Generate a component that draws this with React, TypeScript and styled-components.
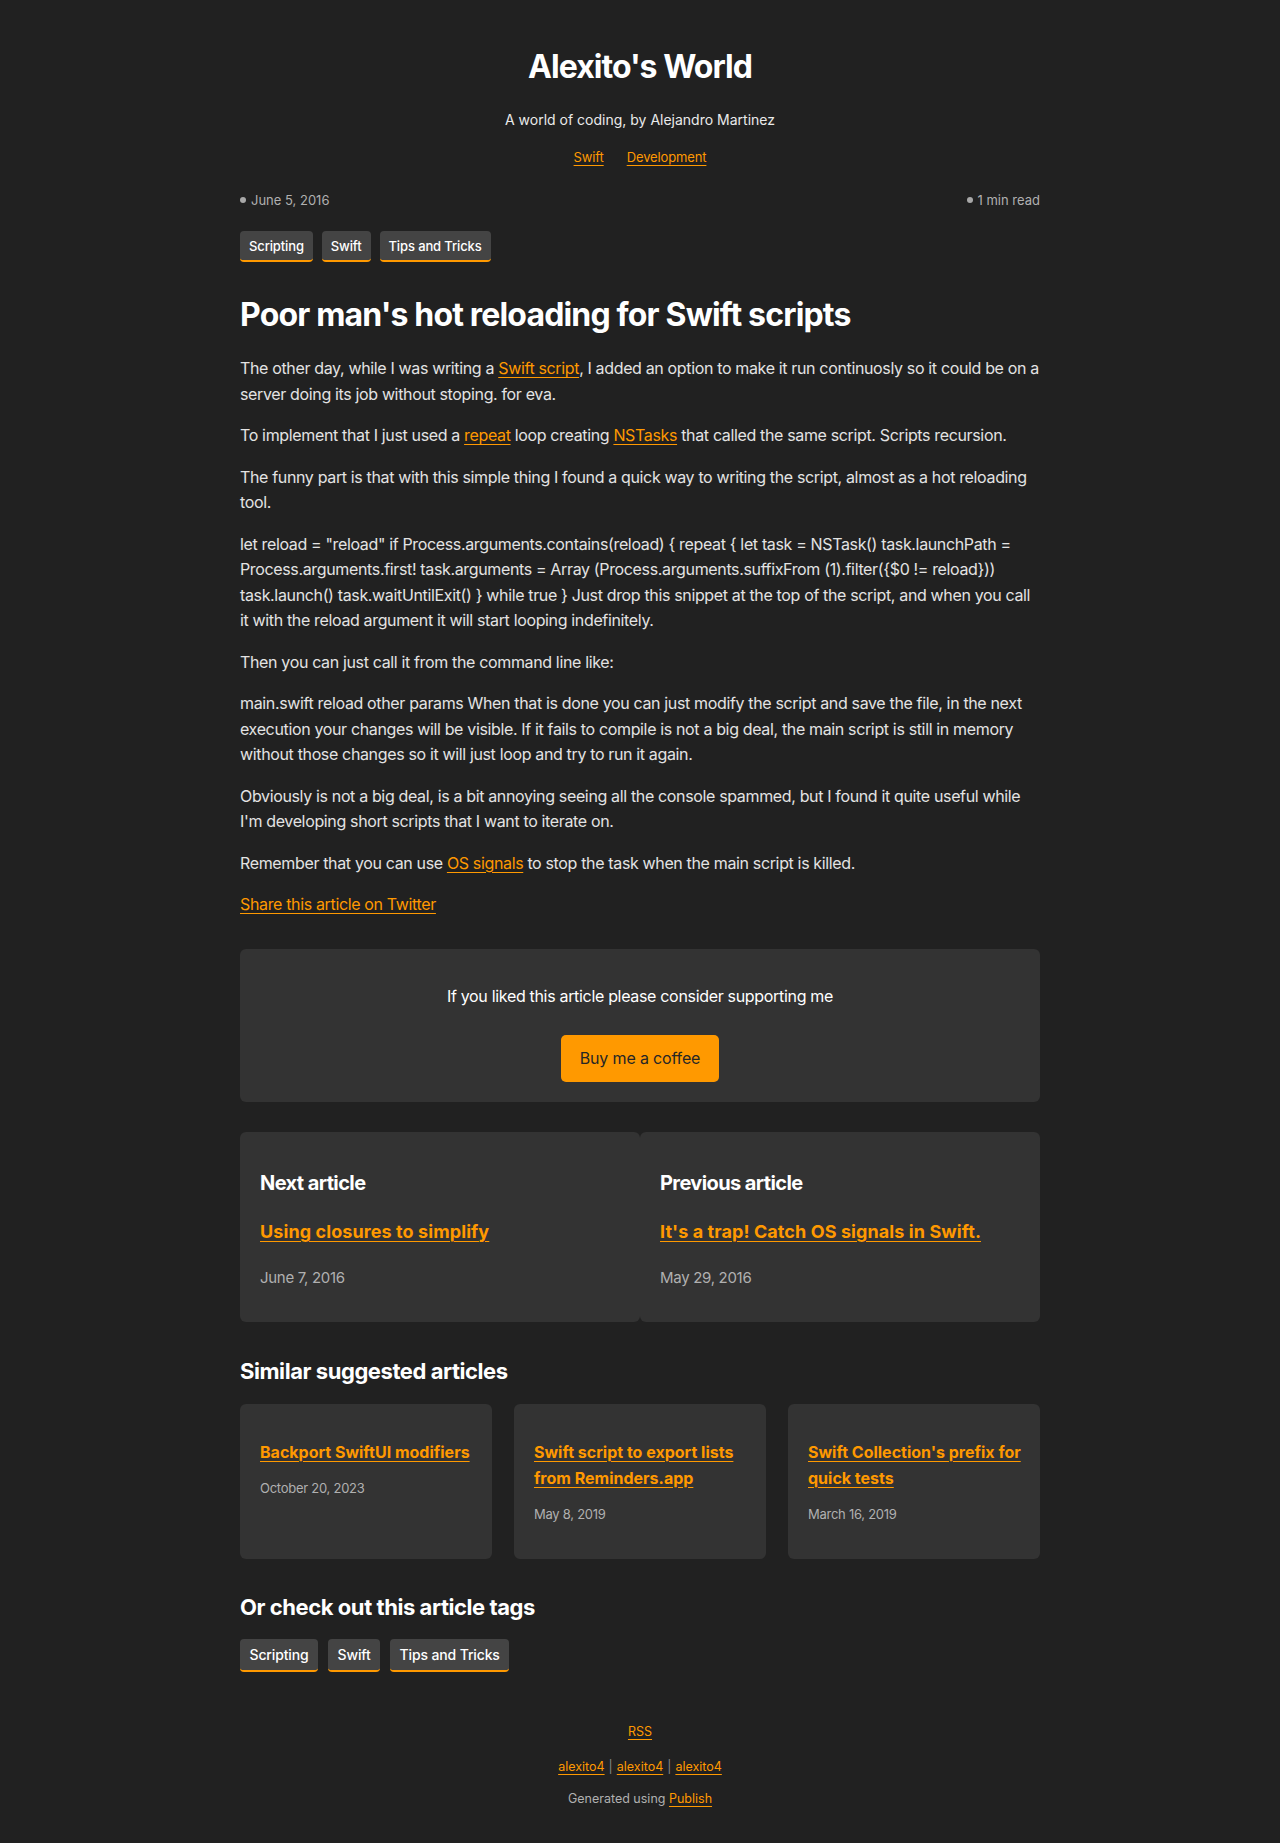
import React from "react";
import styled, { createGlobalStyle } from "styled-components";

const GlobalStyle = createGlobalStyle`
  html, body { margin: 0; padding: 0; background: #212121; }
  body {
    font-family: Inter, "Noto Sans", "Liberation Sans", sans-serif;
    color: #e3e3e3;
    -webkit-font-smoothing: antialiased;
  }
  * { box-sizing: border-box; }
`;

const ORANGE = "#ff9900";

const Page = styled.div`
  width: 800px;
  margin: 0 auto;
  padding: 48px 0 34px;
`;

const Header = styled.header`
  display: flex;
  flex-direction: column;
  align-items: center;
  text-align: center;
`;

const SiteTitle = styled.h1`
  margin: 0;
  font-size: 32px;
  line-height: 38px;
  font-weight: 700;
  letter-spacing: -0.03em;
  color: #fff;
`;

const Subtitle = styled.p`
  margin: 23px 0 0;
  font-size: 14px;
  line-height: 22px;
  color: #eaeaea;
`;

const Nav = styled.nav`
  display: flex;
  gap: 23px;
  margin-top: 16px;
  font-size: 13px;
  line-height: 20px;
  letter-spacing: -0.01em;
`;

const Link = styled.a`
  color: ${ORANGE};
  text-decoration: underline;
  text-decoration-thickness: 1px;
  text-underline-offset: 3px;
`;

const Meta = styled.div`
  display: flex;
  justify-content: space-between;
  margin-top: 23px;
  font-size: 13px;
  line-height: 20px;
  color: #b0b0b0;
`;

const MetaItem = styled.span`
  display: inline-flex;
  align-items: center;
  gap: 5px;
  &::before {
    content: "";
    width: 6px;
    height: 6px;
    border-radius: 50%;
    background: #a8a8a8;
  }
`;

const TagList = styled.div<{ $top: number; $gap: number }>`
  display: flex;
  gap: ${(p) => p.$gap}px;
  margin-top: ${(p) => p.$top}px;
`;

const Tag = styled.a<{ $large?: boolean }>`
  display: inline-flex;
  align-items: center;
  height: ${(p) => (p.$large ? 33 : 31)}px;
  padding: 0 ${(p) => (p.$large ? 9.5 : 9)}px;
  background: #444;
  color: #fff;
  font-size: ${(p) => (p.$large ? 14 : 13)}px;
  font-weight: 500;
  letter-spacing: -0.01em;
  border-radius: 4px;
  border-bottom: 2px solid ${ORANGE};
  text-decoration: none;
`;

const ArticleTitle = styled.h2`
  margin: 33px 0 0;
  font-size: 32px;
  line-height: 40px;
  font-weight: 700;
  letter-spacing: -0.026em;
  color: #fff;
`;

const Body = styled.div`
  margin-top: 21px;
  font-size: 16px;
  line-height: 25.5px;
  letter-spacing: -0.022em;
  color: #e3e3e3;
  p { margin: 0 0 16px; }
  p:last-child { margin-bottom: 0; }
`;

const SupportBox = styled.section`
  display: flex;
  flex-direction: column;
  align-items: center;
  margin-top: 31px;
  padding: 35px 20px 20px;
  background: #333;
  border-radius: 6px;
`;

const SupportText = styled.p`
  margin: 0;
  font-size: 16px;
  line-height: 25px;
  letter-spacing: -0.02em;
  color: #fff;
`;

const CoffeeButton = styled.a`
  display: inline-flex;
  align-items: center;
  justify-content: center;
  margin-top: 26px;
  width: 158px;
  height: 47px;
  background: ${ORANGE};
  color: #262626;
  font-size: 16px;
  letter-spacing: -0.01em;
  border-radius: 5px;
  text-decoration: none;
`;

const NavCards = styled.div`
  display: grid;
  grid-template-columns: 1fr 1fr;
  margin-top: 30px;
`;

const NavCard = styled.div`
  display: flex;
  flex-direction: column;
  align-items: flex-start;
  height: 190px;
  padding: 37px 20px 0;
  background: #333;
  border-radius: 6px;
`;

const NavLabel = styled.h3`
  margin: 0;
  font-size: 20px;
  line-height: 28px;
  font-weight: 700;
  letter-spacing: -0.03em;
  color: #fff;
`;

const NavLink = styled(Link)`
  margin-top: 22px;
  font-size: 18px;
  line-height: 26px;
  font-weight: 700;
  letter-spacing: 0.005em;
`;

const CardDate = styled.span<{ $gap: number; $size: number }>`
  margin-top: ${(p) => p.$gap}px;
  font-size: ${(p) => p.$size}px;
  line-height: ${(p) => (p.$size <= 14 ? 20 : 22)}px;
  letter-spacing: -0.02em;
  color: #b0b0b0;
`;

const SectionTitle = styled.h2<{ $top: number }>`
  margin: ${(p) => p.$top}px 0 0;
  font-size: 22px;
  line-height: 30px;
  font-weight: 700;
  letter-spacing: -0.02em;
  color: #fff;
`;

const Suggested = styled.div`
  display: grid;
  grid-template-columns: repeat(3, 1fr);
  gap: 22px;
  margin-top: 18px;
`;

const SuggestCard = styled.div`
  display: flex;
  flex-direction: column;
  align-items: flex-start;
  padding: 35px 8px 35px 20px;
  background: #333;
  border-radius: 6px;
  min-height: 154px;
`;

const SuggestLink = styled(Link)`
  font-size: 16px;
  line-height: 26px;
  font-weight: 700;
`;

const Footer = styled.footer`
  display: flex;
  flex-direction: column;
  align-items: center;
  margin-top: 50px;
  font-size: 12.5px;
  line-height: 20px;
  color: #b0b0b0;
`;

const FooterLine = styled.p<{ $top: number }>`
  margin: ${(p) => p.$top}px 0 0;
`;

const Sep = styled.span`
  color: #888;
  margin: 0 4px;
`;

const tags = ["Scripting", "Swift", "Tips and Tricks"];

const suggestions = [
  { title: "Backport SwiftUI modifiers", date: "October 20, 2023" },
  { title: "Swift script to export lists from Reminders.app", date: "May 8, 2019" },
  { title: "Swift Collection's prefix for quick tests", date: "March 16, 2019" },
];

export default function App() {
  return (
    <>
      <GlobalStyle />
      <Page>
        <Header>
          <SiteTitle>Alexito's World</SiteTitle>
          <Subtitle>A world of coding, by Alejandro Martinez</Subtitle>
          <Nav>
            <Link href="#">Swift</Link>
            <Link href="#">Development</Link>
          </Nav>
        </Header>

        <Meta>
          <MetaItem>June 5, 2016</MetaItem>
          <MetaItem>1 min read</MetaItem>
        </Meta>

        <TagList $top={21} $gap={9}>
          {tags.map((t) => (
            <Tag key={t} href="#">{t}</Tag>
          ))}
        </TagList>

        <ArticleTitle>Poor man's hot reloading for Swift scripts</ArticleTitle>

        <Body>
          <p>
            The other day, while I was writing a <Link href="#">Swift script</Link>, I added an
            option to make it run continuosly so it could be on a server doing its job without
            stoping. for eva.
          </p>
          <p>
            To implement that I just used a <Link href="#">repeat</Link> loop creating{" "}
            <Link href="#">NSTasks</Link> that called the same script. Scripts recursion.
          </p>
          <p>
            The funny part is that with this simple thing I found a quick way to writing the
            script, almost as a hot reloading tool.
          </p>
          <p>
            let reload = "reload" if Process.arguments.contains(reload) {"{"} repeat {"{"} let task
            = NSTask() task.launchPath = Process.arguments.first! task.arguments = Array
            (Process.arguments.suffixFrom (1).filter({"{"}$0 != reload{"}"})) task.launch()
            task.waitUntilExit() {"}"} while true {"}"} Just drop this snippet at the top of the
            script, and when you call it with the reload argument it will start looping
            indefinitely.
          </p>
          <p>Then you can just call it from the command line like:</p>
          <p>
            main.swift reload other params When that is done you can just modify the script and
            save the file, in the next execution your changes will be visible. If it fails to
            compile is not a big deal, the main script is still in memory without those changes so
            it will just loop and try to run it again.
          </p>
          <p>
            Obviously is not a big deal, is a bit annoying seeing all the console spammed, but I
            found it quite useful while I'm developing short scripts that I want to iterate on.
          </p>
          <p>
            Remember that you can use <Link href="#">OS signals</Link> to stop the task when the
            main script is killed.
          </p>
          <p>
            <Link href="#">Share this article on Twitter</Link>
          </p>
        </Body>

        <SupportBox>
          <SupportText>If you liked this article please consider supporting me</SupportText>
          <CoffeeButton href="#">Buy me a coffee</CoffeeButton>
        </SupportBox>

        <NavCards>
          <NavCard>
            <NavLabel>Next article</NavLabel>
            <NavLink href="#">Using closures to simplify</NavLink>
            <CardDate $gap={22} $size={15}>June 7, 2016</CardDate>
          </NavCard>
          <NavCard>
            <NavLabel>Previous article</NavLabel>
            <NavLink href="#">It's a trap! Catch OS signals in Swift.</NavLink>
            <CardDate $gap={22} $size={15}>May 29, 2016</CardDate>
          </NavCard>
        </NavCards>

        <SectionTitle $top={34}>Similar suggested articles</SectionTitle>
        <Suggested>
          {suggestions.map((s) => (
            <SuggestCard key={s.title}>
              <SuggestLink href="#">{s.title}</SuggestLink>
              <CardDate $gap={13} $size={13}>{s.date}</CardDate>
            </SuggestCard>
          ))}
        </Suggested>

        <SectionTitle $top={33}>Or check out this article tags</SectionTitle>
        <TagList $top={17} $gap={10}>
          {tags.map((t) => (
            <Tag key={t} href="#" $large>{t}</Tag>
          ))}
        </TagList>

        <Footer>
          <FooterLine $top={0}>
            <Link href="#">RSS</Link>
          </FooterLine>
          <FooterLine $top={15}>
            <Link href="#">alexito4</Link>
            <Sep>|</Sep>
            <Link href="#">alexito4</Link>
            <Sep>|</Sep>
            <Link href="#">alexito4</Link>
          </FooterLine>
          <FooterLine $top={12}>
            Generated using <Link href="#">Publish</Link>
          </FooterLine>
        </Footer>
      </Page>
    </>
  );
}
